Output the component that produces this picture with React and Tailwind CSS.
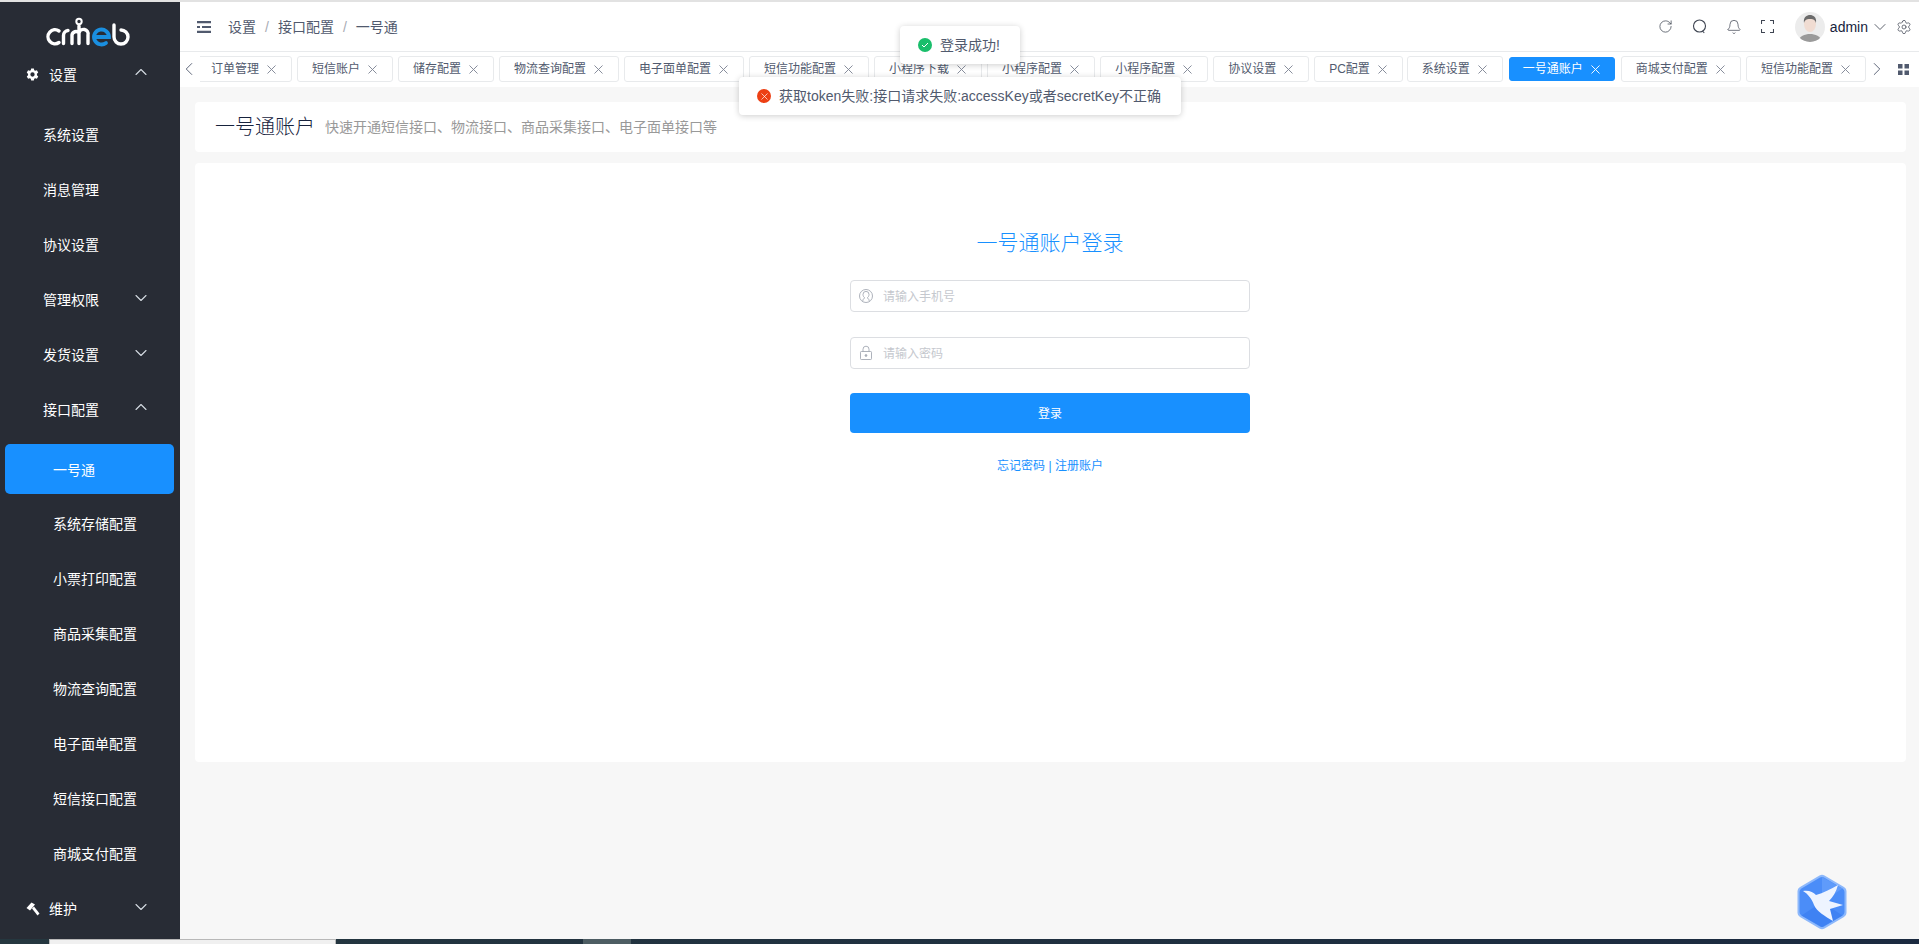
import React from 'react';
import { X, ChevronLeft, ChevronRight, ChevronUp, ChevronDown, RotateCw, Bell, Settings } from 'lucide-react';

const font = "font-['Liberation_Sans','Noto_Sans_CJK_SC',sans-serif]";

const tabs = [
  ['订单管理'], ['短信账户'], ['储存配置'], ['物流查询配置'], ['电子面单配置'], ['短信功能配置'], ['小程序下载'], ['小程序配置'], ['小程序配置'], ['协议设置'], ['PC配置', false, true], ['系统设置'], ['一号通账户', true], ['商城支付配置'], ['短信功能配置'],
];

function Logo() {
  return (
    <svg width="100" height="40" viewBox="0 0 100 40" fill="none" stroke="#fff" strokeWidth="3.4" strokeLinecap="round">
      <path d="M19 20A7 7 0 1 0 19 31.500" />
      <path d="M23.500 32.500V24.500a5 5 0 0 1 4.500-5" />
      <path d="M32 32.500V24a4 4 0 0 1 7-2M39 15V32.500M39 22a4.500 4.500 0 0 1 9 2V32.500" />
      <circle cx="39" cy="10.500" r="2.700" strokeWidth="2" />
      <path d="M54.500 26H69a7.500 7.500 0 1 0-3 6" stroke="#1a8fe0" strokeWidth="3.800" />
      <path d="M74 14V26a7 7 0 1 0 7-7" />
    </svg>
  );
}

function Row({ label, icon, open, chevron, level = 1, extra = '' }) {
  return (
    <div className={`relative flex h-[55px] items-center text-[14px] text-white ${level === 1 ? 'pl-[43px]' : 'pl-[53px]'} ${extra}`}>
      {icon && <span className="absolute left-[26px] top-[21px]">{icon}</span>}
      <span className={`pt-[2px] ${icon ? 'ml-[6px]' : ''}`}>{label}</span>
      {chevron && (open
        ? <ChevronUp className="absolute left-[131px] top-[15px]" size={20} strokeWidth={1.3} color="#d5dbe2" />
        : <ChevronDown className="absolute left-[131px] top-[16px]" size={20} strokeWidth={1.3} color="#d5dbe2" />)}
    </div>
  );
}

function Gear() {
  return (
    <svg width="13" height="13" viewBox="0 0 24 24" fill="#fff">
      <path fillRule="evenodd" d="M9.500 1h5l.7 3.200 1.800 1 3.100-1 2.500 4.300-2.400 2.200v2.600l2.400 2.200-2.500 4.300-3.100-1-1.800 1-.7 3.200h-5l-.7-3.200-1.800-1-3.100 1L1.400 15.700l2.400-2.200v-2.600L1.400 8.500l2.500-4.300 3.100 1 1.800-1zM12 8a4 4 0 1 0 0 8 4 4 0 0 0 0-8z" />
    </svg>
  );
}

function Hammer() {
  return (
    <svg width="14" height="14" viewBox="0 0 14 14" fill="#fff">
      <path d="M0.500 6 L5.500 0.500 L9 2.500 L4 8.500 Z" />
      <path d="M6 6.500 L8 4.500 L13.500 11.500 L11.500 13.500 Z" />
    </svg>
  );
}

function Tab({ label, active, tight }) {
  return (
    <div className={`flex shrink-0 items-center rounded-[3px] border text-[12px] ${tight ? '-mr-[1px]' : ''} ${active ? 'mx-[1px] my-[1px] h-[24px] border-[#1890ff] bg-[#1890ff] px-[13px] text-white' : 'h-[26px] border-[#e8eaec] bg-white px-[14px] text-[#515a6e]'}`}>
      <span className="whitespace-nowrap">{label}</span>
      <X className="-mx-[2px] ml-[5px]" size={15} strokeWidth={1.5} color={active ? '#fff' : '#808695'} />
    </div>
  );
}

function Bird() {
  return (
    <svg width="50" height="56" viewBox="0 0 50 56">
      <path d="M22.500 1.500 Q25 0 27.500 1.500 L47 13 Q49.500 14.500 49.500 17 V39 Q49.500 41.500 47 43 L27.500 54.500 Q25 56 22.500 54.500 L3 43 Q0.500 41.500 0.500 39 V17 Q0.500 14.500 3 13 Z" fill="#8db8fb" />
      <path d="M23 3.500 Q25 2.500 27 3.500 L45.500 14.500 Q47.500 15.700 47.500 18 V38 Q47.500 40.300 45.500 41.500 L27 52.500 Q25 53.500 23 52.500 L4.500 41.500 Q2.500 40.300 2.500 38 V18 Q2.500 15.700 4.500 14.500 Z" fill="#4b8df8" />
      <path d="M25 3 L45.500 14.500 L25 28 Z" fill="#5f9bfa" />
      <path d="M25 28 L45.500 41.500 L25 53 L4.500 41.500 Z" fill="#3f82f3" />
      <path d="M6 17 C12 16 16 18 19 21 C26 19 34 15 41 11 C39 18 36 23 32 27 L46 31 L33 35 L36 47 C28 42 20 38 17 31 C15 25 11 20 6 17 Z" fill="#eef4ff" />
    </svg>
  );
}

function UserIcon() {
  return (
    <svg width="16" height="16" viewBox="0 0 16 16" fill="none" stroke="#a4a9b3" strokeWidth="0.9">
      <circle cx="8" cy="8" r="6.500" />
      <path d="M4.800 13.500c0-1.800.6-3 1.900-3.600C5.600 9.100 5 7.800 5 6.400a3 3 0 0 1 6 0c0 1.400-.6 2.700-1.700 3.500 1.300.6 1.900 1.800 1.900 3.600" />
    </svg>
  );
}

function LockIcon() {
  return (
    <svg width="16" height="16" viewBox="0 0 16 16" fill="none" stroke="#a4a9b3" strokeWidth="0.9">
      <rect x="2.500" y="6.500" width="11" height="8" rx="0.800" />
      <path d="M5 6.500V4.200a3 3 0 0 1 6 0V6.500" />
      <circle cx="8" cy="10.500" r="0.900" fill="#a4a9b3" />
    </svg>
  );
}

export default function App() {
  return (
    <div className={`${font} flex h-[944px] w-[1919px] flex-col overflow-hidden bg-[#f7f7f7]`}>
      <div className="h-[2px] shrink-0 bg-[#e2e2e2]" />
      <div className="flex min-h-0 flex-1">
        <aside className="w-[180px] shrink-0 bg-[#282c35]">
          <div className="relative h-[45px]">
            <div className="absolute left-[40px] top-[9px]"><Logo /></div>
          </div>
          <Row label="设置" icon={<Gear />} chevron open extra="mb-[5px]" />
          <Row label="系统设置" />
          <Row label="消息管理" />
          <Row label="协议设置" />
          <Row label="管理权限" chevron />
          <Row label="发货设置" chevron />
          <Row label="接口配置" chevron open />
          <div className="ml-[5px] mr-[6px] mt-[7px] mb-[2px] flex h-[50px] items-center rounded-[5px] bg-[#1890ff] pl-[48px] pt-[2px] text-[14px] text-white">一号通</div>
          <Row level={2} label="系统存储配置" />
          <Row level={2} label="小票打印配置" />
          <Row level={2} label="商品采集配置" />
          <Row level={2} label="物流查询配置" />
          <Row level={2} label="电子面单配置" />
          <Row level={2} label="短信接口配置" />
          <Row level={2} label="商城支付配置" />
          <Row label="维护" icon={<Hammer />} chevron />
        </aside>

        <main className="flex min-w-0 flex-1 flex-col">
          <header className="flex h-[50px] shrink-0 items-center border-b border-[#e8eaec] bg-white pl-[17px]">
            <svg width="14" height="12" viewBox="0 0 14 12" fill="#515a6e"><path d="M0 0h14v2.200H0zM5 4.900h9v2.200H5zM0 9.800h14V12H0zM0 4.900h3v2.200H0z" /></svg>
            <nav className="ml-[17px] flex items-center pt-[2px] text-[14px] text-[#515a6e]">
              <span>设置</span><span className="mx-[9px] text-[#a8abb3]">/</span>
              <span>接口配置</span><span className="mx-[9px] text-[#a8abb3]">/</span>
              <span>一号通</span>
            </nav>
            <div className="ml-auto flex items-center text-[#3f4552]">
              <RotateCw size={15} strokeWidth={1.2} />
              <svg className="ml-[19px]" width="15" height="15" viewBox="0 0 15 15" fill="none" stroke="#3f4552" strokeWidth="1.100"><circle cx="7.500" cy="7" r="6" /><path d="M10.500 12l1.800 2" /></svg>
              <Bell className="ml-[19px]" size={16} strokeWidth={1.1} />
              <svg className="ml-[19px]" width="13" height="13" viewBox="0 0 13 13" fill="none" stroke="#3f4552" strokeWidth="1.100"><path d="M.500 4V.500h3.500M9 .500h3.500V4M12.500 9v3.500H9M4 12.500H.500V9" /></svg>
              <div className="ml-[21px] flex h-[30px] w-[30px] items-end justify-center overflow-hidden rounded-full bg-[#ececec]">
                <svg width="30" height="30" viewBox="0 0 30 30"><path d="M3 30c1-6 7-8 12-8s11 2 12 8z" fill="#9a9a9a" /><ellipse cx="15" cy="12" rx="6" ry="8" fill="#f0dcd2" /><path d="M9 11c-1-6 3-8 6-8s7 2 6 8c-1-3-2-4-6-4s-5 1-6 4z" fill="#6b6b6b" /></svg>
              </div>
              <span className="ml-[5px] text-[14px] leading-none text-[#17233d]">admin</span>
              <ChevronDown className="-mx-[2px] ml-[2px]" size={20} strokeWidth={1} />
              <Settings className="ml-[8px] mr-[7px]" size={16} strokeWidth={1.1} />
            </div>
          </header>

          <div className="flex h-[35px] shrink-0 items-start bg-white pt-[4px]">
            <ChevronLeft className="-ml-[2px] mt-[2px] shrink-0" size={22} strokeWidth={1} color="#515a6e" />
            <div className="w-[1666px] overflow-hidden">
              <div className="-ml-[4px] flex gap-[5px]">
                {tabs.map(([l, a, t], i) => <Tab key={i} label={l} active={a} tight={t} />)}
              </div>
            </div>
            <ChevronRight className="mt-[2px] shrink-0" size={22} strokeWidth={1} color="#515a6e" />
            <svg className="ml-[10px] mt-[8px]" width="11" height="11" viewBox="0 0 11 11" fill="#515a6e"><rect width="4.500" height="4.500" /><rect x="6.500" width="4.500" height="4.500" /><rect y="6.500" width="4.500" height="4.500" /><rect x="6.500" y="6.500" width="4.500" height="4.500" /></svg>
          </div>

          <div className="flex min-h-0 flex-1 flex-col pl-[15px] pr-[13px] pt-[15px]">
            <div className="flex h-[50px] items-center rounded-[4px] bg-white pl-[20px]">
              <span className="text-[20px] font-light text-[#17233d]">一号通账户</span>
              <span className="ml-[10px] text-[14px] text-[#999]">快速开通短信接口、物流接口、商品采集接口、电子面单接口等</span>
            </div>
            <div className="mt-[11px] flex h-[599px] flex-col items-center rounded-[4px] bg-white pr-[1px] pt-[64px]">
              <h2 className="text-[21px] font-light leading-[32px] text-[#1890ff]">一号通账户登录</h2>
              <div className="mt-[21px] flex h-[32px] w-[400px] items-center rounded-[4px] border border-[#dcdee2] pl-[7px] text-[12px] text-[#c5c8ce]">
                <UserIcon />
                <span className="ml-[9px] pt-[2px]">请输入手机号</span>
              </div>
              <div className="mt-[25px] flex h-[32px] w-[400px] items-center rounded-[4px] border border-[#dcdee2] pl-[7px] text-[12px] text-[#c5c8ce]">
                <LockIcon />
                <span className="ml-[9px] pt-[2px]">请输入密码</span>
              </div>
              <button className="mt-[24px] h-[40px] w-[400px] rounded-[4px] bg-[#1890ff] pt-[2px] text-[12px] text-white">登录</button>
              <div className="mt-[24px] text-[12px] leading-[18px] text-[#1890ff]">忘记密码 | 注册账户</div>
            </div>
          </div>
        </main>
      </div>
      <div className="flex h-[5px] shrink-0 bg-gradient-to-r from-[#25373f] to-[#1b2a40]">
        <div className="ml-[49px] w-[287px] border-l border-t border-r border-[#b8b8b8] bg-[#f0f0f0]" />
        <div className="ml-[247px] w-[48px] bg-[#4d5d63]" />
      </div>

      <div className="absolute left-[900px] top-[26px] flex h-[38px] w-[120px] items-center rounded-[4px] bg-white pl-[18px] text-[14px] text-[#515a6e] shadow-[0_1px_6px_rgba(0,0,0,0.2)]">
        <span className="flex h-[14px] w-[14px] items-center justify-center rounded-full bg-[#19be6b]">
          <svg width="8" height="8" viewBox="0 0 8 8" fill="none" stroke="#fff" strokeWidth="1"><path d="M1 4l2 2 4-4" /></svg>
        </span>
        <span className="ml-[8px]">登录成功!</span>
      </div>
      <div className="absolute left-[739px] top-[77px] flex h-[38px] w-[442px] items-center rounded-[4px] bg-white pl-[18px] text-[14px] text-[#515a6e] shadow-[0_1px_6px_rgba(0,0,0,0.2)]">
        <span className="flex h-[14px] w-[14px] items-center justify-center rounded-full bg-[#ed4014]">
          <X size={11} strokeWidth={1.5} color="#fff" />
        </span>
        <span className="ml-[8px] whitespace-nowrap">获取token失败:接口请求失败:accessKey或者secretKey不正确</span>
      </div>
      <div className="absolute left-[1797px] top-[874px]"><Bird /></div>
    </div>
  );
}
